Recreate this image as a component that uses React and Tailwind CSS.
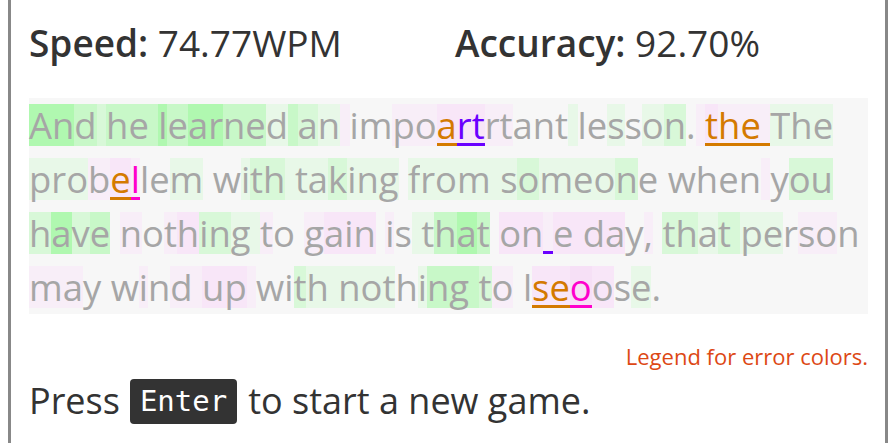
import React from 'react'

const FONT = { fontFamily: '"Open Sans", "Noto Sans", sans-serif' }

const BG = {
  '.': '',
  '1': 'bg-[#e8f8e8]',
  '2': 'bg-[#d8f8d8]',
  '3': 'bg-[#c8f8c8]',
  '4': 'bg-[#b0f8b0]',
  a: 'bg-[#f8eef8]',
  b: 'bg-[#f8e6f8]',
  c: 'bg-[#f6e0f6]',
}

const ERR = {
  o: 'text-[#d47a00] shadow-[inset_0_-3px_0_#d47a00]',
  v: 'text-[#6a00ff] shadow-[inset_0_-3px_0_#6a00ff]',
  m: 'text-[#ff00cc] shadow-[inset_0_-3px_0_#ff00cc]',
}

// text, background level per char, error mark per char
const lines = [
  [
    'And he learned an impoartrtant lesson. the The',
    '4432333434433' + '1321' + 'a..aa' + 'bbb' + 'aa' + '...' + '1..1.12.' + 'ab' + 'aaa' + '111',
    '......................ovv..............oooo...',
  ],
  [
    'probellem with taking from someone when you',
    '111aba..1.' + '.122' + '1112111.' + '1111' + '1121112..' + '....a' + '.222',
    '....om.....................................',
  ],
  [
    'have nothing to gain is that on e day, that person',
    '2423.' + 'a.ab2211' + 'a..' + 'abbb.' + 'a.1' + '1343.' + 'bba' + 'bb' + 'bb.a.' + '22122' + '11.aa',
    '...............................v..................',
  ],
  [
    'may wind up with nothing to lseoose.',
    'aa..' + '.a.aa' + 'bba' + '..21' + '1111.133' + '32' + 'a..' + 'bbcb.1..',
    '.............................oom......',
  ],
]

const TypedLine = ({ text, bg, err }) => (
  <div className="flex whitespace-pre">
    {text.split('').map((ch, i) => (
      <span
        key={i}
        className={`inline-block h-[42px] leading-[42px] ${BG[bg[i]] || ''} ${ERR[err[i]] || 'text-[#a6a6a6]'}`}
      >
        {ch}
      </span>
    ))}
  </div>
)

const App = () => {
  return (
    <div className="w-[895px] h-[443px] overflow-hidden bg-white" style={FONT}>
      <div className="ml-[8px] mr-[7px] h-full border-x-[3px] border-[#888] pl-[18px] pr-[17px] pt-[21px]">
        <div className="flex text-[#333] text-[37px] leading-[44px]">
          <div className="w-[426px]"><span className="font-semibold">Speed:</span> 74.77WPM</div>
          <div><span className="font-semibold">Accuracy:</span> 92.70%</div>
        </div>

        <div className="mt-[33px] bg-[#f7f7f7] py-[6px] flex flex-col gap-[12px] text-[36.4px]">
          {lines.map((l, i) => (
            <TypedLine key={i} text={l[0]} bg={l[1]} err={l[2]} />
          ))}
        </div>

        <div className="mt-[30px] text-right text-[22px] leading-[24px] text-[#dd4814]">
          Legend for error colors.
        </div>

        <div className="mt-[10px] flex items-center text-[36px] text-[#333] leading-[46px]">
          Press
          <span className="ml-[10px] mr-[11px] px-[10px] rounded-[4px] bg-[#333] text-white text-[29px] leading-[45px]" style={{ fontFamily: '"DejaVu Sans Mono", monospace' }}>Enter</span>
          to start a new game.
        </div>
      </div>
    </div>
  )
}

export default App
